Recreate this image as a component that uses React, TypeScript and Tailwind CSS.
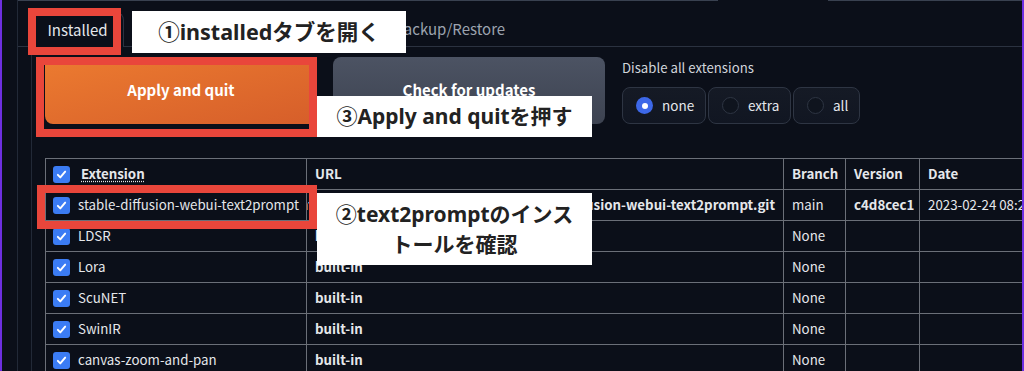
const ui = { fontFamily: '"Noto Sans CJK JP", "Lato", sans-serif' };
const note = { fontFamily: '"Noto Sans", "Noto Sans CJK JP", sans-serif' };

type Row = { name: string; url: string; branch: string; version?: string; date?: string };

const rows: Row[] = [
  {
    name: "stable-diffusion-webui-text2prompt",
    url: "https://github.com/toshiaki1729/stable-diffusion-webui-text2prompt.git",
    branch: "main",
    version: "c4d8cec1",
    date: "2023-02-24 08:24:19",
  },
  { name: "LDSR", url: "built-in", branch: "None" },
  { name: "Lora", url: "built-in", branch: "None" },
  { name: "ScuNET", url: "built-in", branch: "None" },
  { name: "SwinIR", url: "built-in", branch: "None" },
  { name: "canvas-zoom-and-pan", url: "built-in", branch: "None" },
];

function Check() {
  return (
    <span className="flex h-[17px] w-[17px] shrink-0 items-center justify-center rounded-[3px] bg-[#3b7cf4]">
      <svg viewBox="0 0 16 16" className="h-[13px] w-[13px]" fill="none" stroke="white" strokeWidth="2.4" strokeLinecap="round" strokeLinejoin="round">
        <path d="M3.5 8.5l3 3 6-7" />
      </svg>
    </span>
  );
}

function Radio({ label, on, w }: { label: string; on?: boolean; w: string }) {
  return (
    <div className={`flex h-[37px] items-center gap-[9px] rounded-lg border border-[#2e3543] bg-gradient-to-b from-[#151a25] to-[#111622] pl-[13px] ${w}`}>
      {on ? (
        <span className="flex h-[17px] w-[17px] items-center justify-center rounded-full bg-[#3d68e8]">
          <span className="h-[6px] w-[6px] rounded-full bg-white" />
        </span>
      ) : (
        <span className="h-[17px] w-[17px] rounded-full border border-[#2e3543] bg-[#0f141e]" />
      )}
      <span className="text-[13.5px] text-[#e5e7eb]">{label}</span>
    </div>
  );
}

export default function App() {
  return (
    <div className="relative flex h-[371px] w-[1024px] overflow-hidden border-x-2 border-[#6d2fe0] bg-[#0b0f19]" style={ui}>
      <div className="ml-[15px] flex flex-1 flex-col border-l border-[#222937]">
        {/* top edge */}
        <div className="flex h-px shrink-0">
          <div className="w-[700px] bg-[#394150]" />
          <div className="w-[110px]" />
          <div className="flex-1 bg-[#394150]" />
        </div>

        {/* tabs */}
        <div className="flex h-[46px] shrink-0 items-end">
          <div className="w-[13px] border-b border-[#2b3240]" />
          <div className="flex h-[35px] w-[93px] items-center justify-center rounded-t-lg border border-b-0 border-[#2b3240] text-[15px] text-[#e5e7eb]">
            Installed
          </div>
          <div className="flex h-[35px] w-[98px] items-center justify-center border-b border-[#2b3240] text-[15px] text-[#9ca3af]">
            Available
          </div>
          <div className="flex h-[35px] w-[160px] items-center justify-center border-b border-[#2b3240] text-[15px] text-[#9ca3af]">
            Install from URL
          </div>
          <div className="flex h-[35px] items-center border-b border-[#2b3240] pl-[12px] pr-4 text-[15px] text-[#9ca3af]">
            Backup/Restore
          </div>
          <div className="h-[35px] flex-1 border-b border-[#2b3240]" />
        </div>

        {/* panel */}
        <div className="ml-[13px] flex-1 shrink-0 border-l border-[#222937] pl-[13px] pt-[10px]">
          <div className="flex items-start gap-4">
            <button className="flex h-[67px] w-[272px] items-center justify-center rounded-lg bg-gradient-to-br from-[#ec7b30] to-[#d65e2a] text-[15px] font-bold text-white">
              Apply and quit
            </button>
            <button className="flex h-[67px] w-[272px] items-center justify-center rounded-lg bg-gradient-to-b from-[#4c5363] to-[#3d4351] text-[15px] font-semibold text-white">
              Check for updates
            </button>
            <div className="ml-px flex flex-col">
              <div className="mt-px text-[13.2px] leading-5 text-[#d1d5db]">Disable all extensions</div>
              <div className="mt-[9px] flex gap-[2px]">
                <Radio label="none" on w="w-[84px]" />
                <Radio label="extra" w="w-[83px]" />
                <Radio label="all" w="w-[67px]" />
              </div>
            </div>
          </div>

          {/* table */}
          <div className="mt-[34px] w-[1100px] border-l border-t border-[#6b6f78] text-[13.3px] text-[#e5e7eb]">
            <div className="flex h-[31px] border-b border-[#6b6f78] font-semibold">
              <div className="flex w-[261px] items-center gap-[11px] border-r border-[#6b6f78] pl-[7px]">
                <Check />
                <span className="underline decoration-dotted underline-offset-2">Extension</span>
              </div>
              <div className="flex w-[477px] items-center border-r border-[#6b6f78] pl-[8px]">URL</div>
              <div className="flex w-[62px] items-center border-r border-[#6b6f78] pl-[8px]">Branch</div>
              <div className="flex w-[74px] items-center border-r border-[#6b6f78] pl-[8px]">Version</div>
              <div className="flex flex-1 items-center pl-[8px]">Date</div>
            </div>
            {rows.map((r) => (
              <div key={r.name} className="flex h-[31px] border-b border-[#6b6f78]">
                <div className="flex w-[261px] items-center gap-[8px] border-r border-[#6b6f78] pl-[7px]">
                  <Check />
                  <span className="whitespace-nowrap">{r.name}</span>
                </div>
                <div className="flex w-[477px] items-center justify-end overflow-hidden border-r border-[#6b6f78] px-[8px] font-semibold">
                  <span className={`whitespace-nowrap ${r.url === "built-in" ? "mr-auto" : ""}`}>{r.url}</span>
                </div>
                <div className="flex w-[62px] items-center border-r border-[#6b6f78] pl-[8px]">{r.branch}</div>
                <div className="flex w-[74px] items-center border-r border-[#6b6f78] pl-[8px] font-semibold">{r.version}</div>
                <div className="flex flex-1 items-center whitespace-nowrap pl-[8px]">{r.date}</div>
              </div>
            ))}
          </div>
        </div>
      </div>

      {/* annotations */}
      <div className="absolute left-[26px] top-[8px] h-[47px] w-[93px] border-[8px] border-[#e9463b]" />
      <div className="absolute left-[34px] top-[57px] h-[80px] w-[281px] border-[8px] border-[#e9463b]" />
      <div className="absolute left-[35px] top-[185px] h-[44px] w-[280px] border-[8px] border-[#e9463b]" />

      <div className="absolute left-[130px] top-[11px] flex h-[42px] w-[274px] items-center justify-center bg-white text-[21.5px] font-bold text-[#222]" style={note}>
        ①installedタブを開く
      </div>
      <div className="absolute left-[315px] top-[96px] flex h-[41px] w-[275px] items-center justify-center bg-white text-[21px] font-bold text-[#222]" style={note}>
        ③Apply and quitを押す
      </div>
      <div className="absolute left-[315px] top-[193px] flex h-[72px] w-[275px] flex-col items-center justify-center bg-white text-[21px] font-bold leading-[30px] text-[#222]" style={note}>
        <span>②text2promptのインス</span>
        <span>トールを確認</span>
      </div>
    </div>
  );
}
